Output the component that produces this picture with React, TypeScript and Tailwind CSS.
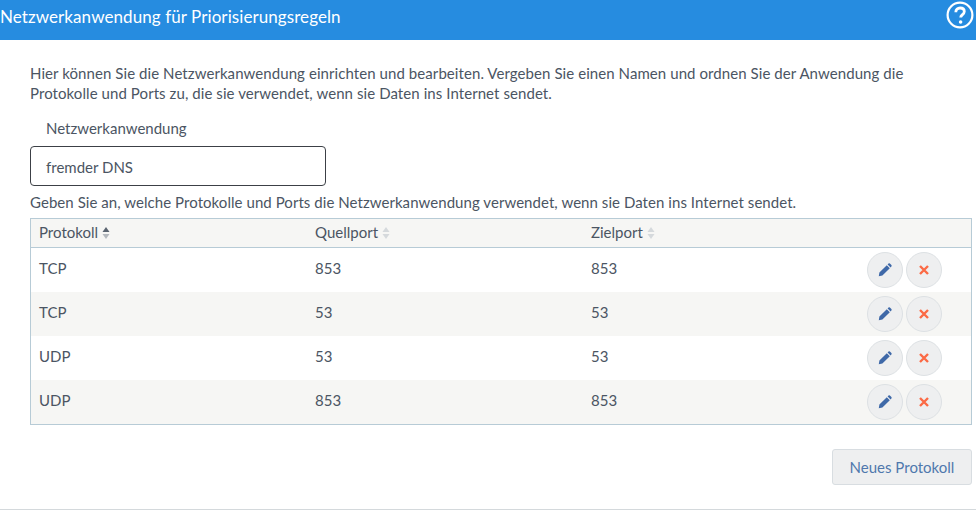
const rows = [
  { proto: 'TCP', src: '853', dst: '853' },
  { proto: 'TCP', src: '53', dst: '53' },
  { proto: 'UDP', src: '53', dst: '53' },
  { proto: 'UDP', src: '853', dst: '853' },
];

function SortIcon({ active }: { active?: boolean }) {
  return (
    <svg width="8" height="14" viewBox="0 0 8 14" className="ml-[4px] mt-[1px]">
      <path d="M4 1 L7.5 6 H0.5 Z" fill={active ? '#5a6470' : '#d5d9dc'} />
      <path d="M4 13 L7.5 8 H0.5 Z" fill={active ? '#b4b9be' : '#d5d9dc'} />
    </svg>
  );
}

function RoundButton({ children }: { children: React.ReactNode }) {
  return (
    <button className="flex h-[36px] w-[36px] items-center justify-center rounded-full border border-[#dde1e4] bg-[#eeeff0]">
      {children}
    </button>
  );
}

export default function App() {
  return (
    <div className="h-[520px] w-[976px] overflow-hidden bg-white font-['Lato','Liberation_Sans',sans-serif] text-[15px] text-[#4b5563]">
      <header className="flex h-[40px] items-center justify-between bg-[#268ce0] pr-[2px] text-white">
        <h1 className="pb-[6px] text-[17px] tracking-[0.08px]">Netzwerkanwendung für Priorisierungsregeln</h1>
        <svg width="28" height="28" viewBox="0 0 28 28" className="mb-[10px]">
          <circle cx="14" cy="14" r="12.4" fill="none" stroke="white" strokeWidth="2.2" />
          <path d="M9.8 11.2c0-2.6 1.9-4.2 4.3-4.2 2.5 0 4.2 1.5 4.2 3.6 0 1.8-1 2.6-2.2 3.4-1 .7-1.4 1.3-1.4 2.6" fill="none" stroke="white" strokeWidth="2.8" />
          <circle cx="14.6" cy="21" r="1.8" fill="white" />
        </svg>
      </header>

      <main className="pl-[30px] pr-[4px]">
        <p className="mt-[23px] w-[900px] leading-[20px] tracking-[0.075px]">
          Hier können Sie die Netzwerkanwendung einrichten und bearbeiten. Vergeben Sie einen Namen und ordnen Sie der Anwendung die
          Protokolle und Ports zu, die sie verwendet, wenn sie Daten ins Internet sendet.
        </p>
        <label className="mt-[15px] block pl-[16px] leading-[20px]">Netzwerkanwendung</label>
        <div className="mt-[8px] flex h-[40px] w-[296px] items-center rounded-[4px] border border-[#3c4046] pl-[15px] pt-[2px]">
          fremder DNS
        </div>
        <p className="mt-[6px] leading-[20px] tracking-[0.055px]">
          Geben Sie an, welche Protokolle und Ports die Netzwerkanwendung verwendet, wenn sie Daten ins Internet sendet.
        </p>

        <div className="mt-[6px] border border-[#b7cbd6]">
          <div className="flex h-[29px] items-center border-b border-[#b7cbd6] bg-[#f6f6f4] pb-[2px] pl-[8px]">
            <div className="flex w-[276px] items-center">Protokoll<SortIcon active /></div>
            <div className="flex w-[276px] items-center">Quellport<SortIcon /></div>
            <div className="flex items-center">Zielport<SortIcon /></div>
          </div>
          {rows.map((row, i) => (
            <div key={i} className={`flex h-[44px] items-center pl-[8px] ${i % 2 === 1 ? 'bg-[#f6f6f4]' : 'bg-white'}`}>
              <div className="w-[276px] pb-[4px]">{row.proto}</div>
              <div className="w-[276px] pb-[4px]">{row.src}</div>
              <div className="w-[276px] pb-[4px]">{row.dst}</div>
              <div className="flex gap-[3px]">
                <RoundButton>
                  <svg width="14" height="14" viewBox="0 0 14 14">
                    <path d="M.8 13.2 L1.4 9.6 L8.8 2.2 L11.8 5.2 L4.4 12.6 Z M9.6 1.4 L10.5 .6 Q11.2 0 11.9 .6 L13.4 2.1 Q14 2.8 13.4 3.5 L12.6 4.4 Z" fill="#3f69a8" />
                  </svg>
                </RoundButton>
                <RoundButton>
                  <svg width="12" height="12" viewBox="0 0 12 12">
                    <path d="M2 2 L10 10 M10 2 L2 10" stroke="#fb6a45" strokeWidth="2.4" />
                  </svg>
                </RoundButton>
              </div>
            </div>
          ))}
        </div>

        <div className="mt-[24px] flex justify-end">
          <button className="h-[36px] w-[140px] rounded-[3px] border border-[#d8dde1] bg-[#eeeff0] text-[#4f78ad]">
            Neues Protokoll
          </button>
        </div>
      </main>
      <div className="mt-[24px] border-t border-[#d4d9dc]" />
    </div>
  );
}
